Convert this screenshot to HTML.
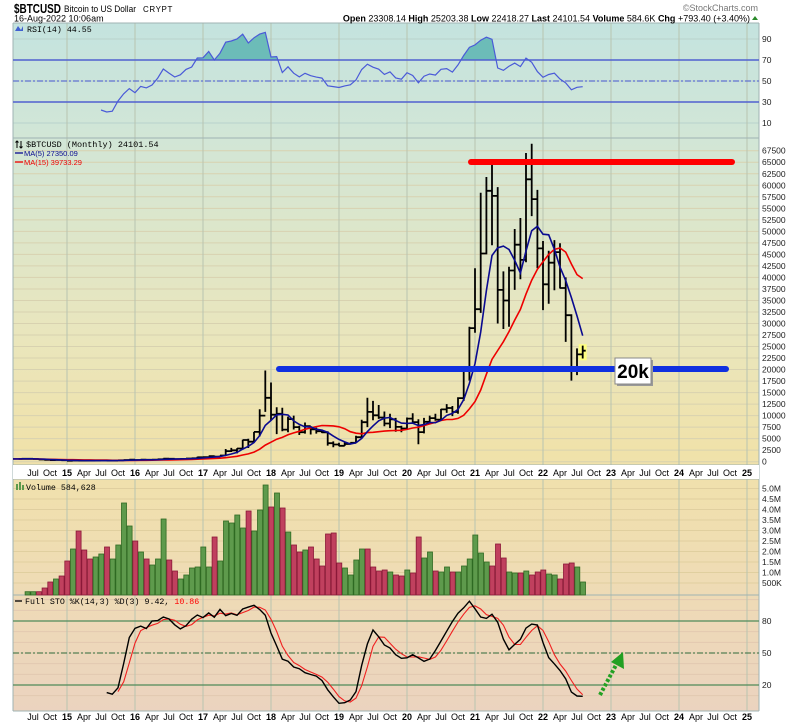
<!DOCTYPE html>
<html><head><meta charset="utf-8">
<style>
html,body{margin:0;padding:0;background:#fff;width:800px;height:724px;overflow:hidden;font-family:"Liberation Sans",sans-serif;}
svg{position:absolute;left:0;top:0}
.t{font-family:"Liberation Sans",sans-serif}
</style></head><body>
<svg id="s" width="800" height="724" xmlns="http://www.w3.org/2000/svg"></svg>
<script>
const S=document.getElementById('s');let o='';
o+=`<defs><linearGradient id="bg" x1="0" y1="23" x2="0" y2="711" gradientUnits="userSpaceOnUse">
<stop offset="0" stop-color="#c4e3df"/><stop offset="0.17" stop-color="#d2e6d6"/><stop offset="0.45" stop-color="#e9e6bd"/><stop offset="0.62" stop-color="#f0e2aa"/><stop offset="0.8" stop-color="#efdcb4"/><stop offset="1" stop-color="#ebd3bf"/></linearGradient>
<clipPath id="rc"><rect x="13" y="23" width="746" height="37"/></clipPath></defs>`;
o+=`<rect x="13" y="23" width="746" height="688" fill="url(#bg)"/>`;
function hl(y,c,w,d){o+=`<line x1="13" x2="759" y1="${y}" y2="${y}" stroke="${c}" stroke-width="${w||1}" ${d?'stroke-dasharray="'+d+'"':''}/>`;}
const yR=v=>81-1.05*(v-50);
for(let v=10;v<=90;v+=20)hl(yR(v),'#b9d2cc');
const yP=p=>461.7-0.004607*p;
for(let p=0;p<=67500;p+=2500)hl(yP(p),'#d8d2b0');
const yV=m=>593.5-21*m;
for(let m=0.5;m<=5;m+=0.5)hl(yV(m),'#e0cf9f');
const yS=v=>653-1.067*(v-50);
for(let v=10;v<=100;v+=10)hl(yS(v),'#e2c9b0');
for(let k=0;k<=10;k++){const x=67+68*k;o+=`<line x1="${x}" x2="${x}" y1="23" y2="711" stroke="#b8c4b0" stroke-width="1"/>`;}
[23,138,465,479,595,711].forEach(y=>hl(y,'#9fb3b3',1));
o+=`<line x1="13" x2="13" y1="23" y2="711" stroke="#9fb3b3"/><line x1="759" x2="759" y1="23" y2="711" stroke="#9fb3b3"/>`;
o+=`<rect x="13" y="465" width="746" height="14" fill="#fff"/>`;
const C=[630,640,590,480,390,338,378,320,
218,254,244,236,230,264,284,230,236,314,378,430,
369,437,416,448,531,673,624,575,609,700,745,963,
970,1190,1080,1350,2300,2480,2870,4700,4340,6470,10000,13860,
10200,10400,6970,9240,7500,6400,7730,7030,6630,6370,4020,3740,
3460,3850,4100,5320,8570,10800,10080,9600,8300,9200,7560,7200,
9350,8600,6420,8660,9460,9140,11350,11660,10780,13800,19700,29000,
33100,45200,58800,57700,37300,35000,41500,47100,43800,61300,57000,46300,
38500,43200,45500,37700,31800,19900,23300,24100];
const HL={36:[1150,750],37:[1200,920],38:[1350,890],39:[1350,1080],40:[2750,1340],41:[3000,2100],42:[2900,1800],43:[4750,2670],44:[5000,2970],45:[6470,4150],46:[11400,5500],47:[19800,10800],
48:[17200,9000],49:[11800,6000],50:[11700,6600],51:[9800,6400],52:[10000,7000],53:[7800,5800],54:[8500,6100],55:[7700,5900],56:[7400,6100],57:[7000,6200],58:[6600,3500],59:[4400,3150],
60:[4100,3350],61:[4200,3400],62:[4150,3800],63:[5650,4050],64:[9100,5330],65:[13900,7500],66:[13200,9000],67:[12300,9300],68:[10900,7700],69:[10400,7300],70:[9500,6500],71:[7800,6400],
72:[9600,6900],73:[10500,8500],74:[9200,3800],75:[9500,6150],76:[10000,8100],77:[10400,8900],78:[11450,8900],79:[12500,10600],80:[12100,9900],81:[14000,10400],82:[19900,13200],83:[29300,17600],
84:[42000,28000],85:[58400,32300],86:[61800,45000],87:[64800,47000],88:[59600,30000],89:[41300,28800],90:[42300,29300],91:[50500,37300],92:[52900,39600],93:[67000,43300],94:[69000,53300],95:[59000,42000],
96:[47900,32900],97:[45800,34300],98:[48100,37200],99:[47400,37600],100:[40000,26000],101:[32000,17600],102:[24600,18800],103:[25200,22400]};
const N=C.length,O=[],H=[],L=[];
for(let i=0;i<N;i++){O[i]=i?C[i-1]:600;}
for(let i=0;i<N;i++){const m=i-8;const r=HL[m+12];if(r){H[i]=r[0];L[i]=r[1];}else{H[i]=Math.max(O[i],C[i])*1.12;L[i]=Math.min(O[i],C[i])*0.88;}}
const X=i=>67+5.667*(i-8);
let bp='';
for(let i=0;i<N;i++){const x=X(i);bp+=`M${x.toFixed(1)} ${yP(H[i]).toFixed(1)}V${yP(L[i]).toFixed(1)}M${(x-3).toFixed(1)} ${yP(O[i]).toFixed(1)}H${x}M${x} ${yP(C[i]).toFixed(1)}H${(x+3).toFixed(1)}`;}
o+=`<rect x="${X(N-1)-4}" y="${yP(25500)}" width="8" height="${yP(22000)-yP(25500)}" fill="#ffff80"/>`;
o+=`<path d="${bp}" stroke="#000" stroke-width="1.8" fill="none"/>`;
function ma(n){let p='';for(let i=0;i<N;i++){const s=Math.max(0,i-n+1);let a=0;for(let j=s;j<=i;j++)a+=C[j];a/=(i-s+1);p+=(i?'L':'M')+X(i).toFixed(1)+' '+yP(a).toFixed(1);}return p;}
o+=`<path d="M13 ${yP(600)}L${X(0)} ${yP(600)}${ma(15).replace('M','L')}" stroke="#e00" stroke-width="1.6" fill="none"/>`;
o+=`<path d="M13 ${yP(600)}L${X(0)} ${yP(600)}${ma(5).replace('M','L')}" stroke="#0a0a90" stroke-width="1.6" fill="none"/>`;
let ag=0,al=0,rp=[];
for(let i=1;i<N;i++){const d=C[i]-C[i-1];const g=Math.max(d,0),l=Math.max(-d,0);
 if(i<=14){ag+=g/14;al+=l/14;}else{ag=(ag*13+g)/14;al=(al*13+l)/14;}
 if(i>=14){const r=100-100/(1+ag/(al||1e-9));rp.push([X(i),yR(r)]);}}
const rs=rp.map((p,j)=>(j?'L':'M')+p[0].toFixed(1)+' '+p[1].toFixed(1)).join('');
o+=`<path clip-path="url(#rc)" d="${rs}L${rp[rp.length-1][0]} 60L${rp[0][0]} 60Z" fill="#6cbcb8"/>`;
hl(yR(70),'#5060d0',1.5);hl(yR(30),'#5060d0',1.5);hl(yR(50),'#6070d0',1.2,'6 2 2 2');
o+=`<path d="${rs}" stroke="#4a5ad8" stroke-width="1.2" fill="none"/>`;
const V=[[591.7,'g'],[591.7,'g'],[591.7,'r'],[588,'r'],[582,'r'],[579,'g'],[576,'r'],[561,'r'],[549,'g'],[531,'r'],[550,'r'],[559,'r'],[557,'g'],[554,'g'],[547,'r'],[559,'g'],[545,'g'],[503,'g'],[526,'g'],[541,'r'],[552,'g'],[559,'r'],[565,'g'],[559,'g'],[519,'g'],[560,'r'],[571,'r'],[579,'g'],[575,'g'],[568,'g'],[567,'g'],[547,'g'],[567,'g'],[537,'r'],[561,'g'],[521,'g'],[523,'g'],[515,'g'],[528,'g'],[511,'r'],[531,'g'],[510,'g'],[485,'g'],[507,'r'],[493,'g'],[508,'r'],[532,'g'],[545,'r'],[552,'r'],[550,'g'],[547,'r'],[559,'r'],[566,'r'],[534,'r'],[533,'r'],[563,'r'],[568,'g'],[575,'g'],[560,'g'],[549,'g'],[549,'r'],[567,'r'],[571,'r'],[570,'r'],[572,'g'],[575,'r'],
[576,'r'],[570,'g'],[573,'r'],[537,'r'],[558,'g'],[552,'g'],[571,'r'],[572,'g'],[567,'g'],[572,'r'],[572,'g'],[566,'g'],[559,'g'],[535,'g'],[553,'g'],[562,'g'],[566,'r'],[544,'r'],[558,'r'],[572,'g'],[573,'g'],[573,'r'],[571,'g'],[575,'r'],[572,'r'],[570,'r'],[574,'g'],[575,'g'],[579,'r'],[564,'r'],[563,'r'],[567,'g'],[582,'g']];
const nv=V.length;
V.forEach((v,j)=>{const x=583-5.667*(nv-1-j);const g=v[1]=='g';o+=`<rect x="${(x-2.5).toFixed(1)}" y="${v[0]}" width="5" height="${(595-v[0]).toFixed(1)}" fill="${g?'#5e9a4c':'#c0405e'}" stroke="${g?'#2f6a22':'#8a1838'}" stroke-width="0.8"/>`;});
hl(yS(80),'#4f8a5a',1.3);hl(yS(20),'#4f8a5a',1.3);hl(yS(50),'#2f6a3a',1,'6 2 2 2');
const raw=[],K=[],D=[];
for(let i=0;i<N;i++){if(i<13){raw[i]=null;continue;}let hh=-1,ll=1e9;for(let j=i-13;j<=i;j++){hh=Math.max(hh,H[j]);ll=Math.min(ll,L[j]);}raw[i]=(C[i]-ll)/(hh-ll)*100;}
for(let i=0;i<N;i++){K[i]=i>=15?(raw[i]+raw[i-1]+raw[i-2])/3:null;D[i]=i>=17?(K[i]+K[i-1]+K[i-2])/3:null;}
function sp(A){let p='',f=1;for(let i=0;i<N;i++){if(A[i]==null)continue;p+=(f?'M':'L')+X(i).toFixed(1)+' '+yS(A[i]).toFixed(1);f=0;}return p;}
o+=`<path d="${sp(D)}" stroke="#f02020" stroke-width="1.1" fill="none"/>`;
o+=`<path d="${sp(K)}" stroke="#000" stroke-width="1.4" fill="none"/>`;
o+=`<line x1="471" x2="732" y1="162" y2="162" stroke="#f00" stroke-width="6" stroke-linecap="round"/>`;
o+=`<line x1="279" x2="726" y1="369" y2="369" stroke="#1030e0" stroke-width="6" stroke-linecap="round"/>`;
o+=`<rect x="617" y="360" width="36" height="26" fill="#999"/><rect x="615" y="358" width="36" height="26" fill="#fff" stroke="#888"/>`;
o+=`<text x="633" y="378" text-anchor="middle" class="t" font-size="19" font-weight="bold">20k</text>`;
o+=`<line x1="600" y1="695" x2="616" y2="665" stroke="#22a022" stroke-width="4" stroke-dasharray="3 2"/>`;
o+=`<polygon points="623,652 624,669 611,662" fill="#22a022"/>`;
function months(y){let t='';for(let m=-6;m<=120;m+=3){const x=67+5.667*m;const mm=((m%12)+12)%12;let s,b='';if(mm==0){s=String(15+Math.floor(m/12));b='font-weight="bold" font-size="10"';}else s=['','','','Apr','','','Jul','','','Oct'][mm];
 t+=`<text x="${x.toFixed(1)}" y="${y}" text-anchor="middle" class="t" font-size="9" ${b}>${s}</text>`;}o+=t;}
months(476);months(720);
function ra(y,s){o+=`<text x="762" y="${y+3}" class="t" font-size="8.5" fill="#222">${s}</text>`;}
[90,70,50,30,10].forEach(v=>ra(yR(v),v));
for(let p=0;p<=67500;p+=2500)ra(yP(p),p);
for(let m=5;m>=1;m-=0.5)ra(yV(m),m.toFixed(1)+'M');ra(yV(0.5),'500K');
[80,50,20].forEach(v=>ra(yS(v),v));
o+=`<text x="27" y="32" font-family="Liberation Mono,monospace" font-size="8.3">RSI(14) 44.55</text>`;
o+=`<path d="M15 31L18 26L21 30L23 26V31Z" fill="#4060d0"/>`;
o+=`<text x="26" y="147" font-family="Liberation Mono,monospace" font-size="8.5">$BTCUSD (Monthly) 24101.54</text>`;
o+=`<path d="M17 148V141M15.5 142.5L17 141L18.5 142.5M21 141V148M19.5 146.5L21 148L22.5 146.5" stroke="#000" stroke-width="1" fill="none"/>`;
o+=`<line x1="15" x2="23" y1="153" y2="153" stroke="#0a0a90" stroke-width="1.3"/><text x="24" y="156" class="t" font-size="7.5" fill="#0a0a90">MA(5) 27350.09</text>`;
o+=`<line x1="15" x2="23" y1="162" y2="162" stroke="#e00" stroke-width="1.3"/><text x="24" y="165" class="t" font-size="7.5" fill="#e00">MA(15) 39733.29</text>`;
o+=`<rect x="16" y="484" width="2" height="6" fill="#5e9a4c"/><rect x="19" y="482" width="2" height="8" fill="#5e9a4c"/><rect x="22" y="485" width="2" height="5" fill="#5e9a4c"/>`;
o+=`<text x="26" y="490" font-family="Liberation Mono,monospace" font-size="8.3">Volume 584,628</text>`;
o+=`<line x1="15" x2="22" y1="601" y2="601" stroke="#000" stroke-width="1.3"/><text x="25" y="604" font-family="Liberation Mono,monospace" font-size="8.3">Full STO %K(14,3) %D(3) 9.42, <tspan fill="#f00">10.86</tspan></text>`;
o+=`<text x="14" y="13" class="t" font-size="13" font-weight="bold" textLength="47" lengthAdjust="spacingAndGlyphs">$BTCUSD</text><text x="64" y="12" class="t" font-size="9.5" textLength="72" lengthAdjust="spacingAndGlyphs">Bitcoin to US Dollar</text><text x="143" y="12" class="t" font-size="8" letter-spacing="0.6">CRYPT</text>`;
o+=`<text x="14" y="21.5" class="t" font-size="9">16-Aug-2022 10:06am</text>`;
o+=`<text x="758" y="11" class="t" font-size="9" fill="#777" text-anchor="end">©StockCharts.com</text>`;
o+=`<text x="750" y="21.5" class="t" font-size="9" text-anchor="end"><tspan font-weight="bold">Open</tspan> 23308.14  <tspan font-weight="bold">High</tspan> 25203.38  <tspan font-weight="bold">Low</tspan> 22418.27  <tspan font-weight="bold">Last</tspan> 24101.54  <tspan font-weight="bold">Volume</tspan> 584.6K  <tspan font-weight="bold">Chg</tspan> +793.40 (+3.40%)</text>`;
o+=`<polygon points="752,20 758,20 755,16" fill="#2a8a2a"/>`;
S.innerHTML=o;
</script>
</body></html>
